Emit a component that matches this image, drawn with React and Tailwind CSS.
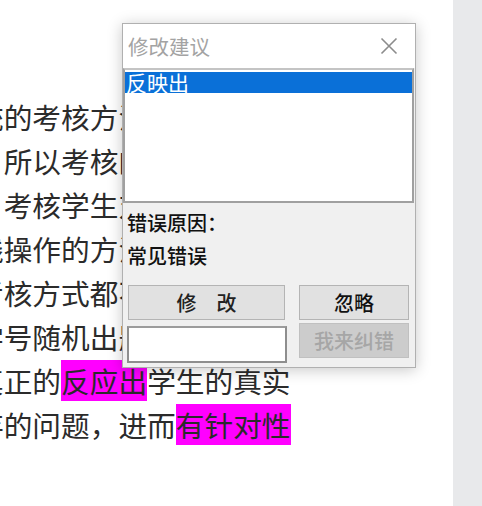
import React from "react";

const lines = [
  { text: "统的考核方法主要是以笔" },
  { text: "，所以考核的方式过于单" },
  { text: "，考核学生对于知识点的" },
  { text: "践操作的方法，让学生在" },
  { text: "考核方式都不能够很好地" },
  { text: "学号随机出题的方式，也" },
  { before: "真正的", mark: "反应出", after: "学生的真实" },
  { before: "存的问题，进而", mark: "有针对性", after: "" },
];

const cjk = { fontFamily: '"Noto Sans CJK SC", "Noto Sans", sans-serif' };

function DocText() {
  return (
    <div className="ml-[-25px] pt-[95px] text-[28.7px] leading-[44px] text-[#2b2b2b]" style={cjk}>
      {lines.map((line, i) => (
        <div key={i} className="whitespace-nowrap">
          {line.mark ? (
            <>
              {line.before}
              <span className="bg-[#ff00ff]">{line.mark}</span>
              {line.after}
            </>
          ) : (
            line.text
          )}
        </div>
      ))}
    </div>
  );
}

function CloseIcon() {
  return (
    <svg width="18" height="18" viewBox="0 0 18 18">
      <path d="M1.5 1.5 L16.5 16.5 M16.5 1.5 L1.5 16.5" stroke="#8c8c8c" strokeWidth="1.6" fill="none" />
    </svg>
  );
}

function SuggestDialog() {
  return (
    <div
      className="absolute left-[122px] top-[23px] flex h-[345px] w-[294px] flex-col border border-[#b0b0b0] bg-[#f0f0f0] shadow-[0_2px_14px_rgba(0,0,0,0.22)]"
      style={cjk}
    >
      <div className="flex h-[44px] items-center justify-between bg-white pl-[5px] pr-[17px]">
        <span className="text-[20.5px] text-[#a3a3a3]">修改建议</span>
        <CloseIcon />
      </div>

      <div className="mr-[1px] h-[135px] border-2 border-[#a0a0a0] border-t-[#c4c4c4] bg-white">
        <div className="mt-[2px] h-[21px] bg-[#0a70d8] pl-[1px] text-[21px] leading-[21px] text-white">反映出</div>
      </div>

      <div className="flex flex-1 flex-col pl-[4px] pt-[6px] text-[20px] leading-[28px] text-[#111]">
        <div className="font-medium">错误原因：</div>
        <div className="mt-[5px] font-medium">常见错误</div>

        <div className="mt-[15px] flex gap-[12px]">
          <div className="flex flex-col">
            <button className="ml-[1px] h-[35px] w-[157px] border border-[#b4b4b4] bg-[#e1e1e1] font-medium text-[#222]">
              修　改
            </button>
            <div className="mt-[6px] h-[37px] w-[160px] border-2 border-[#8e8e8e] border-t-[#9c9c9c] bg-white"></div>
          </div>
          <div className="flex flex-col">
            <button className="h-[35px] w-[110px] border border-[#b4b4b4] bg-[#e1e1e1] font-medium text-[#111]">
              忽略
            </button>
            <button className="mt-[3px] h-[35px] w-[110px] border border-[#c0c0c0] bg-[#cccccc] font-medium text-[#a6a6a6]">
              我来纠错
            </button>
          </div>
        </div>
      </div>
    </div>
  );
}

export default function App() {
  return (
    <div className="relative flex h-[506px] w-[482px] overflow-hidden bg-white">
      <div className="flex-1 overflow-hidden">
        <DocText />
      </div>
      <div className="w-[29px] bg-[#e8e9eb]"></div>
      <SuggestDialog />
    </div>
  );
}
